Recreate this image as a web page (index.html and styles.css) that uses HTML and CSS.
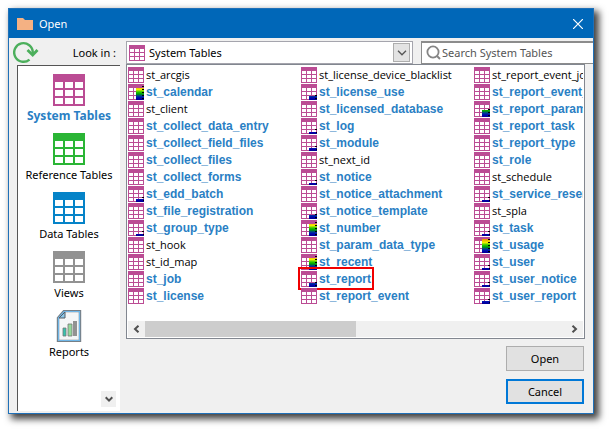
FILE: index.html
```html
<!DOCTYPE html>
<html lang="en">
<head>
<meta charset="utf-8">
<title>Open</title>
<link rel="stylesheet" href="styles.css">
</head>
<body>
<svg class="defs" aria-hidden="true">
  <defs>
    <linearGradient id="heat" gradientUnits="userSpaceOnUse" x1="0" y1="16" x2="0" y2="0">
      <stop offset="0" stop-color="#00008c"/>
      <stop offset=".12" stop-color="#0000b4"/>
      <stop offset=".25" stop-color="#003c96"/>
      <stop offset=".38" stop-color="#00a000"/>
      <stop offset=".5" stop-color="#28c800"/>
      <stop offset=".65" stop-color="#f0f000"/>
      <stop offset=".8" stop-color="#f0b400"/>
      <stop offset="1" stop-color="#f03c00"/>
    </linearGradient>
  </defs>
  <symbol id="t" viewBox="0 0 16 16">
    <path fill="#bb4c94" d="M0 0h16v16H0z"/>
    <path fill="#fff" d="M1 4h4v3H1zM6 4h4v3H6zM11 4h4v3h-4zM1 8h4v3H1zM6 8h4v3H6zM11 8h4v3h-4zM1 12h4v3H1zM6 12h4v3H6zM11 12h4v3h-4z"/>
  </symbol>
  <symbol id="big" viewBox="0 0 32 32">
    <path fill="currentColor" d="M0 0h32v32H0z"/>
    <path fill="#fff" d="M2 8h8v6H2zM12 8h8v6h-8zM22 8h8v6h-8zM2 16h8v6H2zM12 16h8v6h-8zM22 16h8v6h-8zM2 24h8v6H2zM12 24h8v6h-8zM22 24h8v6h-8z"/>
  </symbol>
  <symbol id="h2" viewBox="0 0 16 16"><path fill="url(#heat)" d="M8 14h8v2H8z"/><path d="M14 11h2v1h-2zM15 14h1v1h-1z"/></symbol>
  <symbol id="h3" viewBox="0 0 16 16"><path fill="url(#heat)" d="M8 13h8v3H8z"/><path d="M14 11h2v1h-2zM15 14h1v1h-1z"/></symbol>
  <symbol id="h4" viewBox="0 0 16 16"><path fill="url(#heat)" d="M8 12h8v4H8z"/><path d="M14 11h2v1h-2zM14 14h2v1h-2z"/></symbol>
  <symbol id="h7" viewBox="0 0 16 16"><path fill="url(#heat)" d="M8 9h8v7H8z"/><path d="M14 8h2v1h-2zM14 11h2v1h-2zM14 14h2v1h-2z"/></symbol>
  <symbol id="h12" viewBox="0 0 16 16"><path fill="url(#heat)" d="M8 4h8v12H8z"/><path d="M14 2h2v1h-2zM14 5h2v1h-2zM14 8h2v1h-2zM14 11h2v1h-2zM14 14h2v1h-2z"/></symbol>
  <symbol id="h15" viewBox="0 0 16 16"><path fill="url(#heat)" d="M8 2h8v14H8z"/><path d="M14 2h2v1h-2zM14 5h2v1h-2zM14 8h2v1h-2zM14 11h2v1h-2zM14 14h2v1h-2z"/></symbol>
</svg>

<main class="dialog">
  <header class="titlebar">
    <svg width="16" height="12" viewBox="0 0 16 12" aria-hidden="true"><path fill="#f4b183" d="M0 0h6l2 2h8v10H0z"/></svg>
    <h1>Open</h1>
    <button class="close" aria-label="Close"><svg width="10" height="10" viewBox="0 0 10 10"><path d="M0 0l10 10M10 0L0 10" stroke="#fff" stroke-width="1.2"/></svg></button>
  </header>

  <div class="body">
    <div class="left">
      <div class="lookin">
        <button class="refresh" aria-label="Refresh"><svg width="26" height="24" viewBox="0 0 26 24" fill="none" stroke="#4caf5c"><path stroke-width="2.4" d="M16.500 18.600A9.300 9.300 0 1 1 19.800 11.500v1.500"/><path stroke-width="2.800" d="M14.500 9l5.200 5 4.800-5"/></svg></button>
        <label for="look">Look in :</label>
      </div>
      <nav class="places">
        <button class="place current"><svg class="magenta"><use href="#big"/></svg>System Tables</button>
        <button class="place"><svg class="green"><use href="#big"/></svg>Reference Tables</button>
        <button class="place"><svg class="blue"><use href="#big"/></svg>Data Tables</button>
        <button class="place"><svg class="grey"><use href="#big"/></svg>Views</button>
        <button class="place"><svg viewBox="0 0 32 32"><path d="M11 1h16v30H5V8z" fill="#f4f6f7" stroke="#777f86" stroke-width="2.400"/><path d="M11 1.500h15.500v29h-21V8z" fill="none" stroke="#70b7e8" stroke-width="1.200"/><path d="M6 8l6-6v6z" fill="#8cc8ea" stroke="#555d64"/><path d="M10 18h3v8h-3z" fill="#35c4ae" stroke="#777" stroke-width=".8"/><path d="M15 14h4v12h-4z" fill="#93d99b" stroke="#777" stroke-width=".8"/><path d="M20 11h4v15h-4z" fill="#929292"/></svg>Reports</button>
        <button class="more" aria-label="Scroll down"><svg width="8" height="7" viewBox="0 0 8 7"><path d="M.7 1.200L4 4.600l3.300-3.400" fill="none" stroke="#505050" stroke-width="2"/></svg></button>
      </nav>
    </div>

    <div class="right">
      <div class="toolbar">
        <div class="combo">
          <svg class="icon"><use href="#t"/></svg>
          <select id="look"><option>System Tables</option></select>
          <span class="arrow"><svg width="10" height="6" viewBox="0 0 10 6"><path d="M1 .8l4 4 4-4" fill="none" stroke="#555" stroke-width="1.300"/></svg></span>
        </div>
        <div class="search">
          <svg width="16" height="16" viewBox="0 0 16 16"><circle cx="7" cy="7" r="5.600" fill="none" stroke="#858585" stroke-width="1.800"/><path d="M11 11l3 3" stroke="#858585" stroke-width="2"/></svg>
          <input type="text" placeholder="Search System Tables" aria-label="Search System Tables">
        </div>
      </div>

      <section class="files">
        <ul class="list">
          <li><svg class="icon"><use href="#t"/></svg>st_arcgis</li>
          <li class="used"><svg class="icon"><use href="#t"/><use href="#h12"/></svg>st_calendar</li>
          <li><svg class="icon"><use href="#t"/></svg>st_client</li>
          <li class="used"><svg class="icon"><use href="#t"/></svg>st_collect_data_entry</li>
          <li class="used"><svg class="icon"><use href="#t"/></svg>st_collect_field_files</li>
          <li class="used"><svg class="icon"><use href="#t"/></svg>st_collect_files</li>
          <li class="used"><svg class="icon"><use href="#t"/></svg>st_collect_forms</li>
          <li class="used"><svg class="icon"><use href="#t"/><use href="#h3"/></svg>st_edd_batch</li>
          <li class="used"><svg class="icon"><use href="#t"/></svg>st_file_registration</li>
          <li class="used"><svg class="icon"><use href="#t"/><use href="#h2"/></svg>st_group_type</li>
          <li><svg class="icon"><use href="#t"/></svg>st_hook</li>
          <li><svg class="icon"><use href="#t"/></svg>st_id_map</li>
          <li class="used"><svg class="icon"><use href="#t"/></svg>st_job</li>
          <li class="used"><svg class="icon"><use href="#t"/></svg>st_license</li>
          <li><svg class="icon"><use href="#t"/></svg>st_license_device_blacklist</li>
          <li class="used"><svg class="icon"><use href="#t"/><use href="#h4"/></svg>st_license_use</li>
          <li class="used"><svg class="icon"><use href="#t"/></svg>st_licensed_database</li>
          <li class="used"><svg class="icon"><use href="#t"/><use href="#h2"/></svg>st_log</li>
          <li class="used"><svg class="icon"><use href="#t"/><use href="#h3"/></svg>st_module</li>
          <li><svg class="icon"><use href="#t"/></svg>st_next_id</li>
          <li class="used"><svg class="icon"><use href="#t"/><use href="#h2"/></svg>st_notice</li>
          <li class="used"><svg class="icon"><use href="#t"/></svg>st_notice_attachment</li>
          <li class="used"><svg class="icon"><use href="#t"/><use href="#h4"/></svg>st_notice_template</li>
          <li class="used"><svg class="icon"><use href="#t"/><use href="#h12"/></svg>st_number</li>
          <li class="used"><svg class="icon"><use href="#t"/></svg>st_param_data_type</li>
          <li class="used"><svg class="icon"><use href="#t"/><use href="#h12"/></svg>st_recent</li>
          <li class="used marked"><svg class="icon"><use href="#t"/><use href="#h4"/></svg>st_report</li>
          <li class="used"><svg class="icon"><use href="#t"/></svg>st_report_event</li>
          <li><svg class="icon"><use href="#t"/></svg>st_report_event_job</li>
          <li class="used"><svg class="icon"><use href="#t"/></svg>st_report_event_log</li>
          <li class="used"><svg class="icon"><use href="#t"/><use href="#h7"/></svg>st_report_param</li>
          <li class="used"><svg class="icon"><use href="#t"/></svg>st_report_task</li>
          <li class="used"><svg class="icon"><use href="#t"/></svg>st_report_type</li>
          <li class="used"><svg class="icon"><use href="#t"/></svg>st_role</li>
          <li><svg class="icon"><use href="#t"/></svg>st_schedule</li>
          <li class="used"><svg class="icon"><use href="#t"/><use href="#h2"/></svg>st_service_reservation</li>
          <li><svg class="icon"><use href="#t"/></svg>st_spla</li>
          <li class="used"><svg class="icon"><use href="#t"/><use href="#h2"/></svg>st_task</li>
          <li class="used"><svg class="icon"><use href="#t"/><use href="#h15"/></svg>st_usage</li>
          <li class="used"><svg class="icon"><use href="#t"/><use href="#h2"/></svg>st_user</li>
          <li class="used"><svg class="icon"><use href="#t"/><use href="#h2"/></svg>st_user_notice</li>
          <li class="used"><svg class="icon"><use href="#t"/><use href="#h3"/></svg>st_user_report</li>
        </ul>
        <div class="scrollbar">
          <button aria-label="Scroll left"><svg width="7" height="8" viewBox="0 0 7 8"><path d="M5.500 .7L2 4l3.500 3.300" fill="none" stroke="#505050" stroke-width="2"/></svg></button>
          <div class="track"><div class="thumb"></div></div>
          <button aria-label="Scroll right"><svg width="7" height="8" viewBox="0 0 7 8"><path d="M1.500 .7L5 4 1.500 7.300" fill="none" stroke="#505050" stroke-width="2"/></svg></button>
        </div>
      </section>

      <div class="actions">
        <button>Open</button>
        <button class="default">Cancel</button>
      </div>
    </div>
  </div>
</main>
</body>
</html>
```
FILE: styles.css
```css
* { box-sizing: border-box; }

body {
  margin: 0;
  padding: 8px 16px 17px 8px;
  background: #fff;
  color: #000;
  font: 11px/16px "Noto Sans", "Open Sans", sans-serif;
}

button, input, select { font: inherit; color: inherit; }
button { padding: 0; border: 0; background: none; }
svg { display: block; flex: none; }
.defs { position: absolute; width: 0; height: 0; }
.icon { width: 16px; height: 16px; }

.dialog {
  overflow: hidden;
  border: 1px solid #1f70b8;
  background: #f0f0f0;
  box-shadow: 4px 4px 7px 1px rgba(0, 0, 0, .75);
}

.titlebar {
  display: flex;
  align-items: center;
  gap: 6px;
  height: 29px;
  padding: 0 10px 0 8px;
  background: #0067b8;
  color: #fff;
}
.titlebar h1 { flex: 1; margin: 0; font-size: 11px; font-weight: 400; }

.body { display: flex; gap: 6px; padding: 3px 0 2px 4px; }
.left { display: flex; flex-direction: column; width: 107px; }
.lookin {
  display: flex;
  align-items: center;
  justify-content: space-between;
  height: 24px;
  padding-right: 4px;
}

.places {
  display: flex;
  flex: 1;
  flex-direction: column;
  margin-left: 4px;
  padding-top: 8px;
  border-top: 1px solid #555;
  border-left: 1px solid #555;
  background: #fff;
}
.place {
  display: flex;
  flex-direction: column;
  align-items: center;
  gap: 2px;
  height: 59px;
}
.place svg { width: 32px; height: 32px; }
.current { color: #2a80c4; font-size: 12px; font-weight: 700; }
.magenta { color: #bb4c94; }
.green { color: #2ab535; }
.blue { color: #0583c8; }
.grey { color: #929292; }
.more {
  display: grid;
  place-items: center;
  width: 15px;
  height: 16px;
  margin: auto 4px 4px auto;
  background: #f0f0f0;
}

.right { flex: 1; min-width: 0; }
.toolbar { display: flex; gap: 8px; height: 23px; }
.combo {
  position: relative;
  display: flex;
  flex: 1;
  align-items: center;
  padding: 0 2px;
  border: 1px solid #a5a5ad;
  background: #fff;
}
.combo select {
  flex: 1;
  padding: 0 4px;
  border: 0;
  appearance: none;
  background: #fff;
}
.arrow {
  display: grid;
  place-items: center;
  width: 17px;
  height: 19px;
  border: 1px solid #adadad;
  background: #e3e3e3;
  pointer-events: none;
}
.search {
  display: flex;
  align-items: center;
  flex: 0 0 172px;
  min-width: 0;
  padding-left: 4px;
  border: solid #8c8c8c;
  border-width: 2px 0 1px 1px;
  background: #fff;
}
.search input { min-width: 0; width: 100%; padding: 0; border: 0; }
.search input::placeholder { color: #555; opacity: 1; }

.files {
  margin-right: 8px;
  padding: 1px;
  border: 1px solid #828790;
  background: #fff;
}
.list {
  display: grid;
  grid-auto-flow: column;
  grid-template-rows: repeat(14, 17px);
  grid-auto-columns: 173px;
  margin: 0;
  padding: 0 0 17px;
  overflow: hidden;
  list-style: none;
  font-family: "Open Sans", "Noto Sans", sans-serif;
}
.list li {
  position: relative;
  display: flex;
  align-items: center;
  gap: 2px;
  white-space: nowrap;
}
.list .used { color: #2a80c4; font: 700 12px/16px "Liberation Sans", Arial, sans-serif; }
.marked::after {
  content: "";
  position: absolute;
  inset: -3px 100px -3px -3px;
  border: 2px solid #f00000;
}

.scrollbar { display: flex; height: 16px; background: #f0f0f0; }
.scrollbar button { display: grid; place-items: center; width: 17px; }
.track { flex: 1; }
.thumb { width: 50%; height: 100%; background: #cdcdcd; }

.actions {
  display: flex;
  flex-direction: column;
  align-items: flex-end;
  gap: 8px;
  padding: 7px 9px 7px 0;
}
.actions button {
  width: 78px;
  height: 25px;
  border: 1px solid #adadad;
  background: #e1e1e1;
}
.actions .default { border: 2px solid #0078d7; }
```
